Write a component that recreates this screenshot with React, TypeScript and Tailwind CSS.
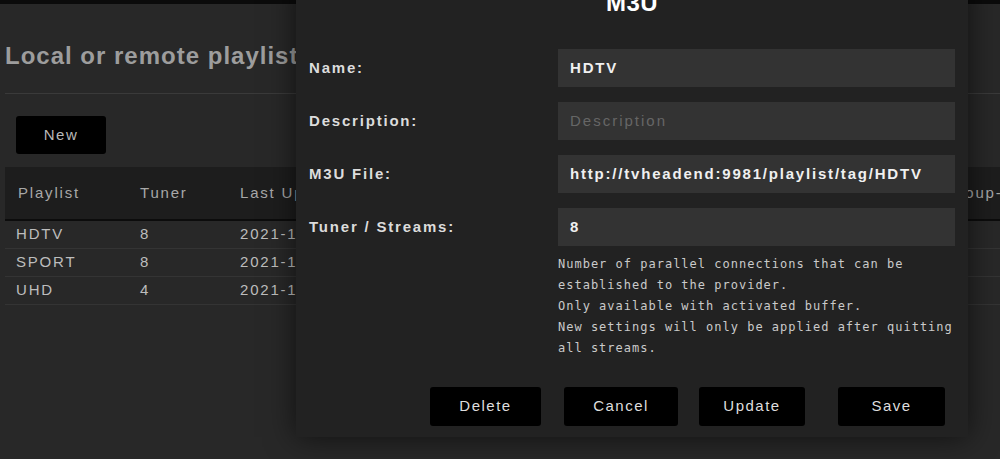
const font = { fontFamily: '"Liberation Sans", Arial, sans-serif' };

const rows = [
  { name: 'HDTV', tuner: '8', updated: '2021-11-02 10:14' },
  { name: 'SPORT', tuner: '8', updated: '2021-11-02 10:14' },
  { name: 'UHD', tuner: '4', updated: '2021-11-02 10:14' },
];

const Field = ({ label, value, placeholder }: { label: string; value?: string; placeholder?: string }) => (
  <div className="flex items-center h-[38px]">
    <div className="w-[249px] text-[15px] font-bold tracking-[1.8px] text-[#dcdcdc]">{label}</div>
    <div className="w-[397px] h-full bg-[#333333] flex items-center px-[12px] text-[15px]">
      {value ? (
        <span className="font-bold tracking-[1.8px] text-[#f0f0f0]">{value}</span>
      ) : (
        <span className="text-[#666666] tracking-[2px]">{placeholder}</span>
      )}
    </div>
  </div>
);

const Btn = ({ children, className = '' }: { children: string; className?: string }) => (
  <button className={`h-[39px] bg-black rounded-[3px] text-[15px] tracking-[1.5px] text-[#dedede] ${className}`}>
    {children}
  </button>
);

export default function App() {
  return (
    <div className="relative w-full h-[459px] overflow-hidden bg-[#282828]" style={font}>
      <div className="h-[4px] bg-[#0b0b0b]" />

      {/* page behind the dialog */}
      <div className="pl-[5px]">
        <h1 className="pt-[34px] h-[89px] text-[24px] font-bold tracking-[1px] text-[#9d9d9d] whitespace-nowrap">
          Local or remote playlist
        </h1>
        <div className="h-px bg-[#3a3a3a]" />
        <div className="pl-[11px] pt-[22px] pb-[13px]">
          <button className="w-[90px] h-[38px] bg-black rounded-[3px] text-[15px] tracking-[1.5px] text-[#b8b8b8]">New</button>
        </div>

        <div className="text-[15px] tracking-[1.8px] whitespace-nowrap">
          <div className="flex items-center h-[54px] bg-[#1d1d1d] border-b-2 border-[#0c0c0c] text-[#a8a8a8] pl-[13px]">
            <div className="w-[122px] shrink-0">Playlist</div>
            <div className="w-[100px] shrink-0">Tuner</div>
            <div className="w-[705px] shrink-0">Last Update</div>
            <div className="shrink-0">Group-Title</div>
          </div>
          {rows.map((r) => (
            <div key={r.name} className="flex items-center h-[28px] border-b border-[#343434] text-[#bdbdbd] pl-[11px]">
              <div className="w-[124px] shrink-0">{r.name}</div>
              <div className="w-[100px] shrink-0">{r.tuner}</div>
              <div>{r.updated}</div>
            </div>
          ))}
        </div>
      </div>

      {/* dialog */}
      <div className="absolute left-[296px] top-[-20px] w-[672px] bg-[#222222] shadow-[0_0_28px_rgba(0,0,0,0.6)] flex flex-col">
        <div className="h-[46px] flex items-center justify-center text-[24px] font-bold text-white tracking-[0.5px]">M3U</div>
        <div className="pt-[23px] pl-[13px] flex flex-col gap-[15px]">
          <Field label="Name:" value="HDTV" />
          <Field label="Description:" placeholder="Description" />
          <Field label="M3U File:" value="http://tvheadend:9981/playlist/tag/HDTV" />
          <Field label="Tuner / Streams:" value="8" />
        </div>
        <div
          className="ml-[262px] mt-[8px] w-[400px] text-[12px] leading-[21px] tracking-[1px] text-[#cacaca]"
          style={{ fontFamily: '"DejaVu Sans Mono", "Liberation Mono", monospace' }}
        >
          <div>Number of parallel connections that can be established to the provider.</div>
          <div>Only available with activated buffer.</div>
          <div>New settings will only be applied after quitting all streams.</div>
        </div>
        <div className="flex justify-end pr-[23px] mt-[28px] pb-[11px]">
          <Btn className="w-[111px]">Delete</Btn>
          <Btn className="w-[114px] ml-[23px]">Cancel</Btn>
          <Btn className="w-[106px] ml-[21px]">Update</Btn>
          <Btn className="w-[107px] ml-[33px]">Save</Btn>
        </div>
      </div>
    </div>
  );
}
